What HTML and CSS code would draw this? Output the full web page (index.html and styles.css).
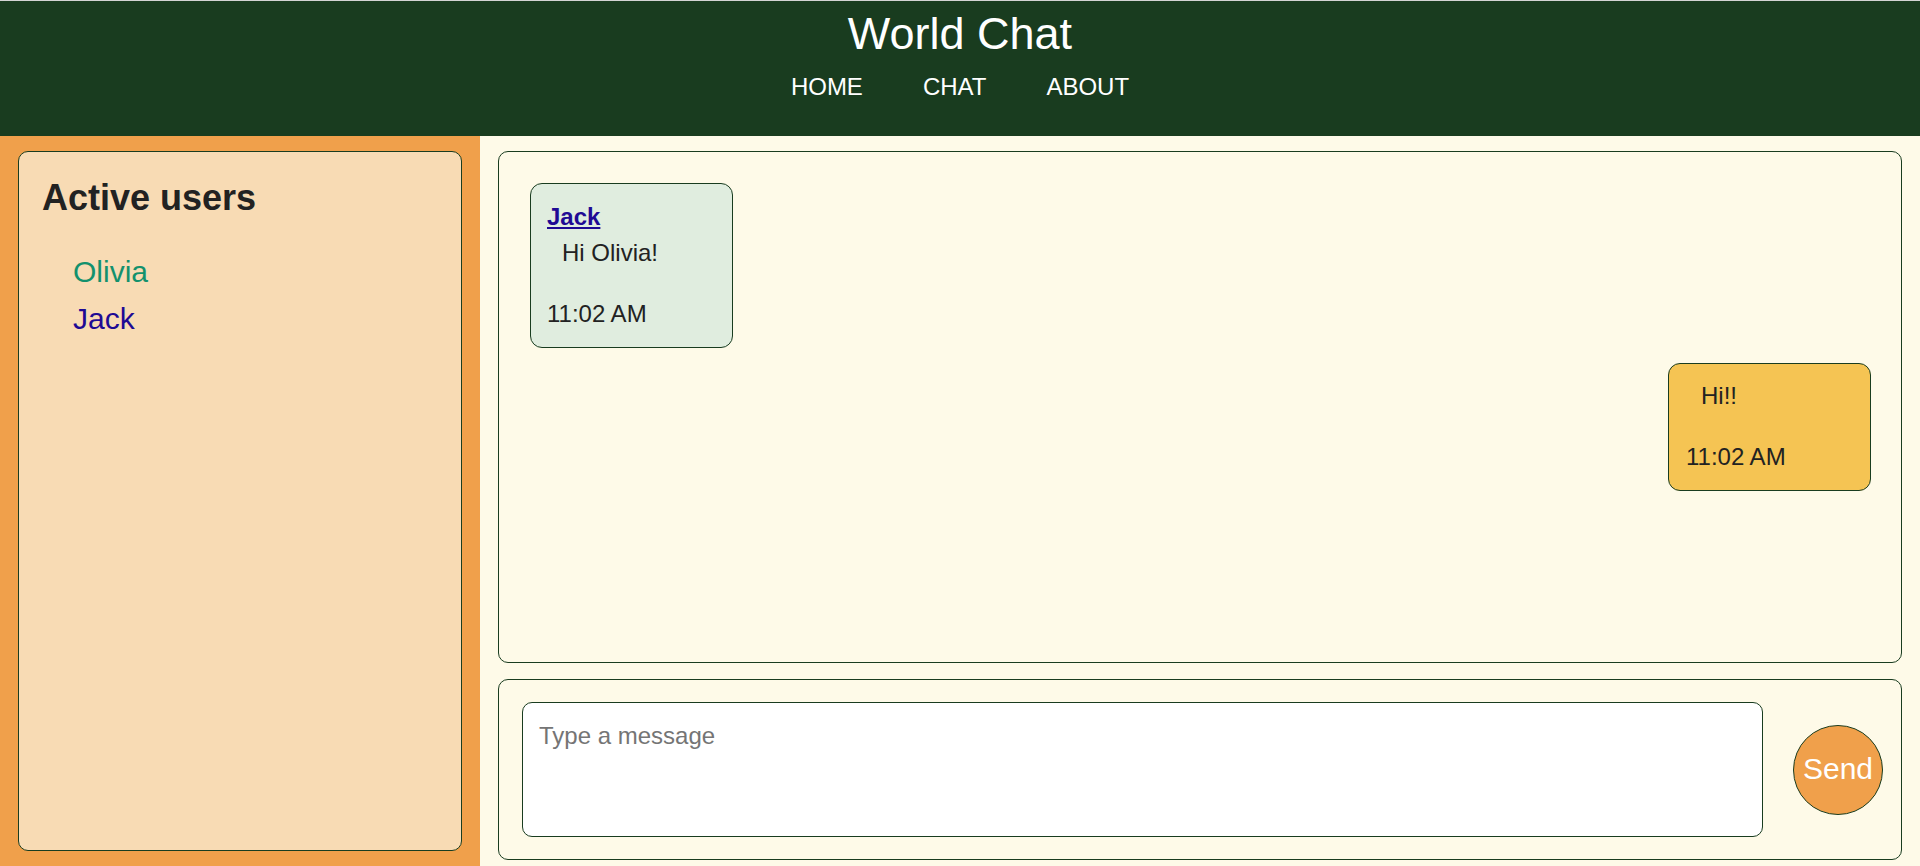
FILE: index.html
```html
<!DOCTYPE html>
<html lang="en">
<head>
<meta charset="utf-8">
<title>World Chat</title>
<link rel="stylesheet" href="styles.css">
</head>
<body>
<header class="site-header">
  <h1 class="site-title">World Chat</h1>
  <nav class="site-nav">
    <a class="nav-link" href="#">HOME</a>
    <a class="nav-link" href="#">CHAT</a>
    <a class="nav-link" href="#">ABOUT</a>
  </nav>
</header>
<div class="layout">
  <aside class="sidebar">
    <div class="users-card">
      <h2 class="users-title">Active users</h2>
      <ul class="users-list">
        <li class="user user-self">Olivia</li>
        <li class="user user-other">Jack</li>
      </ul>
    </div>
  </aside>
  <main class="chat">
    <section class="messages">
      <div class="bubble bubble-in">
        <a class="bubble-name" href="#">Jack</a>
        <p class="bubble-text">Hi Olivia!</p>
        <div class="bubble-time">11:02 AM</div>
      </div>
      <div class="bubble bubble-out">
        <p class="bubble-text bubble-text-first">Hi!!</p>
        <div class="bubble-time">11:02 AM</div>
      </div>
    </section>
    <form class="composer" onsubmit="return false">
      <textarea class="composer-input" placeholder="Type a message" autofocus></textarea>
      <button class="send-btn" type="button">Send</button>
    </form>
  </main>
</div>
</body>
</html>
```
FILE: styles.css
```css
* { box-sizing: border-box; }

html, body {
  margin: 0;
  padding: 0;
  height: 100%;
}

body {
  font-family: "Liberation Sans", Arial, sans-serif;
  font-size: 24px;
  color: #222222;
  display: flex;
  flex-direction: column;
  overflow: hidden;
}

.site-header {
  background: #193c1f;
  border-top: 1px solid #d4d4d4;
  padding: 7px 0 35px;
  text-align: center;
  flex: none;
}

.site-title {
  margin: 0;
  font-size: 45px;
  font-weight: 400;
  line-height: 52px;
  color: #ffffff;
}

.site-nav {
  margin-top: 13px;
  display: flex;
  justify-content: center;
  gap: 60px;
  line-height: 28px;
}

.nav-link {
  color: #ffffff;
  text-decoration: none;
  font-size: 24px;
}

.layout {
  flex: 1;
  display: flex;
  min-height: 0;
}

.sidebar {
  width: 480px;
  flex: none;
  background: #f0a04b;
  padding: 15px 18px;
  display: flex;
}

.users-card {
  flex: 1;
  background: #f8dbb4;
  border: 1px solid #193c1f;
  border-radius: 10px;
  padding: 25px 23px;
}

.users-title {
  margin: 0;
  font-size: 36px;
  font-weight: 700;
  line-height: 41px;
  color: #222222;
}

.users-list {
  list-style: none;
  margin: 30px 0 0;
  padding: 0 0 0 31px;
}

.user {
  font-size: 30px;
  line-height: 47px;
}

.user-self { color: #13916d; }
.user-other { color: #1f0a94; }

.chat {
  flex: 1;
  background: #fefae8;
  padding: 15px 18px 6px;
  display: flex;
  flex-direction: column;
  gap: 16px;
  min-width: 0;
}

.messages {
  flex: 1;
  border: 1px solid #193c1f;
  border-radius: 10px;
  padding: 31px 30px 31px 31px;
  display: flex;
  flex-direction: column;
  align-items: flex-start;
  gap: 15px;
}

.bubble {
  width: 203px;
  border: 1px solid #193c1f;
  border-radius: 12px;
  padding: 19px 16px 19px 16px;
  line-height: 28px;
}

.bubble-in { background: #e0eddf; }

.bubble-out {
  background: #f5c453;
  align-self: flex-end;
  padding-top: 18px;
  padding-left: 17px;
}

.bubble-name {
  display: block;
  font-weight: 700;
  color: #1f0a94;
  text-decoration: underline;
}

.bubble-text {
  margin: 8px 0 0;
  padding-left: 15px;
}

.bubble-text-first { margin-top: 0; }

.bubble-time { margin-top: 33px; }

.composer {
  flex: none;
  height: 181px;
  border: 1px solid #193c1f;
  border-radius: 10px;
  padding: 22px 18px 22px 23px;
  display: flex;
  align-items: center;
  gap: 30px;
  margin: 0;
}

.composer-input {
  flex: 1;
  height: 135px;
  background: #ffffff;
  border: 1px solid #193c1f;
  border-radius: 10px;
  padding: 19px 16px;
  font-family: "Liberation Sans", Arial, sans-serif;
  font-size: 24px;
  line-height: 28px;
  color: #222222;
  caret-color: #000000;
  resize: none;
  outline: none;
}

.composer-input::placeholder { color: #757575; }

.send-btn {
  width: 90px;
  height: 90px;
  flex: none;
  border-radius: 50%;
  border: 1px solid #193c1f;
  background: #f0a04b;
  color: #ffffff;
  font-family: "Liberation Sans", Arial, sans-serif;
  font-size: 30px;
  line-height: 34px;
  padding: 0 0 2px;
  cursor: pointer;
}
```
